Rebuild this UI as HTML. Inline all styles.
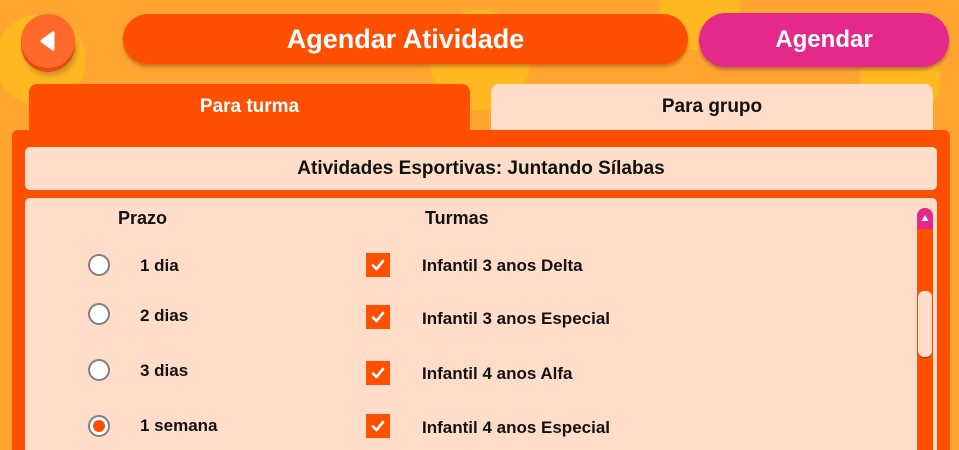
<!DOCTYPE html>
<html style="width:959px;height:450px;overflow:hidden"><head><meta charset="utf-8"><style>
*{margin:0;padding:0;box-sizing:border-box}
body{width:959px;height:450px;overflow:hidden;position:relative;font-family:"Liberation Sans",sans-serif;font-weight:bold;
background:#FFA530;
background-image:radial-gradient(circle at 40px 60px,#FFB820 0 45px,transparent 46px),radial-gradient(circle at 300px 240px,#FFB820 0 60px,transparent 61px),radial-gradient(circle at 620px 200px,#FFB830 0 40px,transparent 41px),radial-gradient(circle at 700px 10px,#FFB820 0 40px,transparent 41px),radial-gradient(circle at 480px 60px,#FFB820 0 50px,transparent 51px),radial-gradient(circle at 900px 80px,#FFB820 0 40px,transparent 41px);}
.a{position:absolute}
.back{left:21px;top:14px;width:54px;height:54px;border-radius:50%;background:#FF6A2A;box-shadow:0 4px 0 #E84A10,2px 8px 4px rgba(120,80,40,.35)}
.title{left:123px;top:14px;width:565px;height:50px;border-radius:25px;background:#FF4F00;box-shadow:0 3px 3px rgba(150,60,0,.45);color:#fff;font-size:27px;text-align:center;line-height:50px}
.ag{left:699px;top:13px;width:250px;height:54px;border-radius:27px;background:#E5298A;box-shadow:0 3px 3px rgba(120,40,60,.45);color:#fff;font-size:24px;text-align:center;line-height:54px}
.tab{top:84px;height:50px;border-radius:8px 8px 0 0;text-align:center;line-height:46px;font-size:19px}
.panel{left:12px;top:130px;width:938px;height:330px;background:#FF4F00;border-radius:6px 6px 0 0}
.box{background:#FFDDC8;border-radius:5px}
.lbl{font-size:17px;color:#111}
.radio{width:22px;height:22px;border-radius:50%;border:2.5px solid #808080;background:#fff}
.chk{width:24px;height:24px;background:#FF4F00}
</style></head><body>
<div class="a back"><svg width="54" height="54"><path d="M32 19 L32 35 L21 27 Z" fill="#fff" stroke="#fff" stroke-width="3" stroke-linejoin="round"/></svg></div>
<div class="a title">Agendar Atividade</div>
<div class="a ag">Agendar</div>
<div class="a tab" style="left:29px;width:441px;background:#FF4F00;color:#fff">Para turma</div>
<div class="a tab" style="left:491px;width:442px;background:#FFDDC8;color:#111">Para grupo</div>
<div class="a panel"></div>
<div class="a box" style="left:25px;top:147px;width:912px;height:43px;text-align:center;line-height:43px;font-size:19px;color:#111">Atividades Esportivas: Juntando Sílabas</div>
<div class="a box" style="left:25px;top:198px;width:912px;height:260px"></div>
<div class="a" style="left:917px;top:208px;width:16px;height:250px;background:#FF4F00;border-radius:8px 8px 0 0"></div>
<div class="a" style="left:917px;top:208px;width:16px;height:21px;background:#E5298A;border-radius:8px 8px 0 0"><svg width="16" height="21"><path d="M4.5 13 L11.5 13 L8 7 Z" fill="#fff"/></svg></div>
<div class="a" style="left:918px;top:291px;width:14px;height:66px;background:#FFDDC8;border-radius:6px;box-shadow:0 1px 1px #a03000"></div>
<div class="a lbl" style="left:118px;top:208px;font-size:18px">Prazo</div>
<div class="a lbl" style="left:425px;top:208px;font-size:18px">Turmas</div>

<div class="a radio" style="left:88px;top:254px"></div>
<div class="a radio" style="left:88px;top:303px"></div>
<div class="a radio" style="left:88px;top:359px"></div>
<div class="a radio" style="left:88px;top:415px"><div style="width:12px;height:12px;border-radius:50%;background:#FF4F00;margin:2.5px"></div></div>
<div class="a lbl" style="left:140px;top:256px">1 dia</div>
<div class="a lbl" style="left:140px;top:306px">2 dias</div>
<div class="a lbl" style="left:140px;top:361px">3 dias</div>
<div class="a lbl" style="left:140px;top:416px">1 semana</div>

<div class="a chk" style="left:366px;top:253px"><svg width="24" height="24"><path d="M7 12.5 L10.5 16 L17 8" fill="none" stroke="#fff" stroke-width="2.6" stroke-linecap="round" stroke-linejoin="round"/></svg></div>
<div class="a chk" style="left:366px;top:305px"><svg width="24" height="24"><path d="M7 12.5 L10.5 16 L17 8" fill="none" stroke="#fff" stroke-width="2.6" stroke-linecap="round" stroke-linejoin="round"/></svg></div>
<div class="a chk" style="left:366px;top:361px"><svg width="24" height="24"><path d="M7 12.5 L10.5 16 L17 8" fill="none" stroke="#fff" stroke-width="2.6" stroke-linecap="round" stroke-linejoin="round"/></svg></div>
<div class="a chk" style="left:366px;top:414px"><svg width="24" height="24"><path d="M7 12.5 L10.5 16 L17 8" fill="none" stroke="#fff" stroke-width="2.6" stroke-linecap="round" stroke-linejoin="round"/></svg></div>
<div class="a lbl" style="left:422px;top:256px">Infantil 3 anos Delta</div>
<div class="a lbl" style="left:422px;top:309px">Infantil 3 anos Especial</div>
<div class="a lbl" style="left:422px;top:364px">Infantil 4 anos Alfa</div>
<div class="a lbl" style="left:422px;top:418px">Infantil 4 anos Especial</div>
</body></html>
